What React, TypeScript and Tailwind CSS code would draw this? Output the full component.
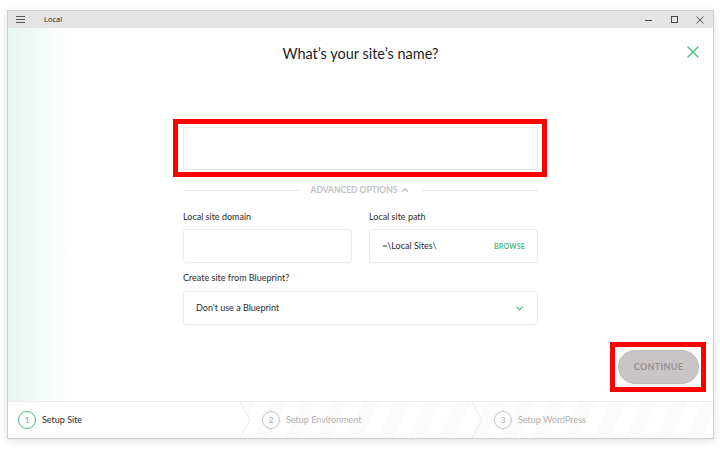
import { ChevronUp, ChevronDown } from "lucide-react";

const lato = "font-['Lato','Liberation_Sans',sans-serif]";

function Field({ children, className = "" }: { children?: React.ReactNode; className?: string }) {
  return (
    <div
      className={`h-[34px] bg-white border border-[#ebebeb] rounded-[3px] flex items-center px-3 shadow-[0_1px_1px_rgba(0,0,0,0.03)] ${className}`}
    >
      {children}
    </div>
  );
}

function Step({ n, label, active }: { n: number; label: string; active?: boolean }) {
  return (
    <div className="flex items-center h-full pl-[10px] gap-[6px]">
      <div
        className={`w-[18px] h-[18px] rounded-full flex items-center justify-center text-[8px] ${
          active ? "border-[1.5px] border-[#51bb7b] text-[#51bb7b]" : "border border-[#c6c6c6] text-[#aaaaaa]"
        }`}
      >
        {n}
      </div>
      <span className={`text-[9px] ${active ? "text-[#2b2b2b]" : "text-[#b0b0b0]"}`}>{label}</span>
    </div>
  );
}

function Chevron({ fill }: { fill?: boolean }) {
  return (
    <svg width="12" height="36" viewBox="0 0 12 36" className="shrink-0">
      {fill && <polygon points="0,0 10,18 0,36" fill="#ffffff" />}
      <polyline points="0,0 10,18 0,36" fill="none" stroke="#e9e9e9" strokeWidth="1" />
    </svg>
  );
}

export default function App() {
  return (
    <div className={`w-[720px] h-[450px] bg-white pt-[10px] pl-[7px] ${lato}`}>
      <div className="w-[707px] h-[429px] border border-[#cfcfcf] shadow-[0_2px_8px_rgba(0,0,0,0.12)] flex flex-col bg-white">
        {/* Title bar */}
        <div className="h-[17px] bg-[#e4e4e4] flex items-center font-['Open_Sans','Liberation_Sans',sans-serif] text-[7.5px] text-[#222]">
          <svg width="9" height="7" viewBox="0 0 9 7" className="ml-[8px]">
            <path d="M0 0.5h9M0 3.5h9M0 6.5h9" stroke="#555" strokeWidth="1" />
          </svg>
          <span className="ml-[19px]">Local</span>
          <div className="ml-auto flex items-center h-full">
            <div className="w-[26px] flex justify-center">
              <div className="w-[7px] h-px bg-[#444] mt-[2px]" />
            </div>
            <div className="w-[26px] flex justify-center">
              <div className="w-[7px] h-[7px] border border-[#444]" />
            </div>
            <div className="w-[26px] flex justify-center">
              <svg width="8" height="8" viewBox="0 0 8 8">
                <path d="M0.5 0.5l7 7M7.5 0.5l-7 7" stroke="#444" strokeWidth="0.9" />
              </svg>
            </div>
          </div>
        </div>

        {/* Main */}
        <div className="relative h-[373px] bg-[linear-gradient(to_right,#e7f5ef_0px,#f3faf7_30px,#ffffff_64px)] flex flex-col items-center">
          <svg width="12" height="12" viewBox="0 0 12 12" className="absolute right-[14px] top-[18px]">
            <path d="M0.7 0.7l10.6 10.6M11.3 0.7L0.7 11.3" stroke="#51bb7b" strokeWidth="1.4" />
          </svg>

          <h1 className="mt-[16px] text-[14.5px] leading-[20px] text-[#1e1e1e]">What’s your site’s name?</h1>

          <div className="relative mt-[63px] w-[355px]">
            <div className="h-[43px] bg-white border border-[#ebebeb] rounded-[3px]" />
            <div className="absolute -left-[10px] -right-[9px] -top-[8px] -bottom-[7px] border-[5px] border-[#ff0000]" />
          </div>

          <div className="mt-[14px] w-[355px] flex items-center h-[12px]">
            <div className="flex-1 h-px bg-[#e8e8e8]" />
            <div className="px-[12px] flex items-center gap-[3px] text-[8.5px] font-bold text-[#c2c2c2]">
              ADVANCED OPTIONS
              <ChevronUp size={10} strokeWidth={3} color="#bdbdbd" />
            </div>
            <div className="flex-1 h-px bg-[#e8e8e8]" />
          </div>

          <div className="mt-[15px] w-[355px] grid grid-cols-2 gap-x-[17px] text-[9px] text-[#2b2b2b]">
            <div>
              <div className="leading-[12px]">Local site domain</div>
              <Field className="mt-[6px]" />
            </div>
            <div>
              <div className="leading-[12px]">Local site path</div>
              <Field className="mt-[6px] justify-between">
                <span>~\Local Sites\</span>
                <span className="text-[7px] font-bold tracking-[0.2px] text-[#51bb7b]">BROWSE</span>
              </Field>
            </div>
          </div>

          <div className="mt-[9px] w-[355px] text-[9px] text-[#2b2b2b]">
            <div className="leading-[12px]">Create site from Blueprint?</div>
            <Field className="mt-[7px] h-[33px] justify-between">
              <span>Don't use a Blueprint</span>
              <ChevronDown size={11} strokeWidth={3} color="#51bb7b" />
            </Field>
          </div>

          <div className="mt-[25px] self-stretch flex justify-end pr-[14px]">
            <div className="relative">
              <div className="w-[81px] h-[34px] rounded-full bg-[#c9c5c6] border border-[#bfbbbc] flex items-center justify-center text-[9px] font-bold tracking-[0.3px] text-[#959192]">
                CONTINUE
              </div>
              <div className="absolute -left-[8px] -right-[7px] -top-[8px] -bottom-[8px] border-[5px] border-[#ff0000]" />
            </div>
          </div>
        </div>

        {/* Footer steps */}
        <div className="flex-1 border-t border-[#ececec] flex bg-[repeating-linear-gradient(115deg,#ffffff_0px,#ffffff_14px,#fbfbfb_14px,#fbfbfb_28px)]">
          <div className="w-[232px] bg-white">
            <Step n={1} label="Setup Site" active />
          </div>
          <Chevron fill />
          <div className="w-[220px]">
            <Step n={2} label="Setup Environment" />
          </div>
          <Chevron />
          <div className="flex-1">
            <Step n={3} label="Setup WordPress" />
          </div>
        </div>
      </div>
    </div>
  );
}
